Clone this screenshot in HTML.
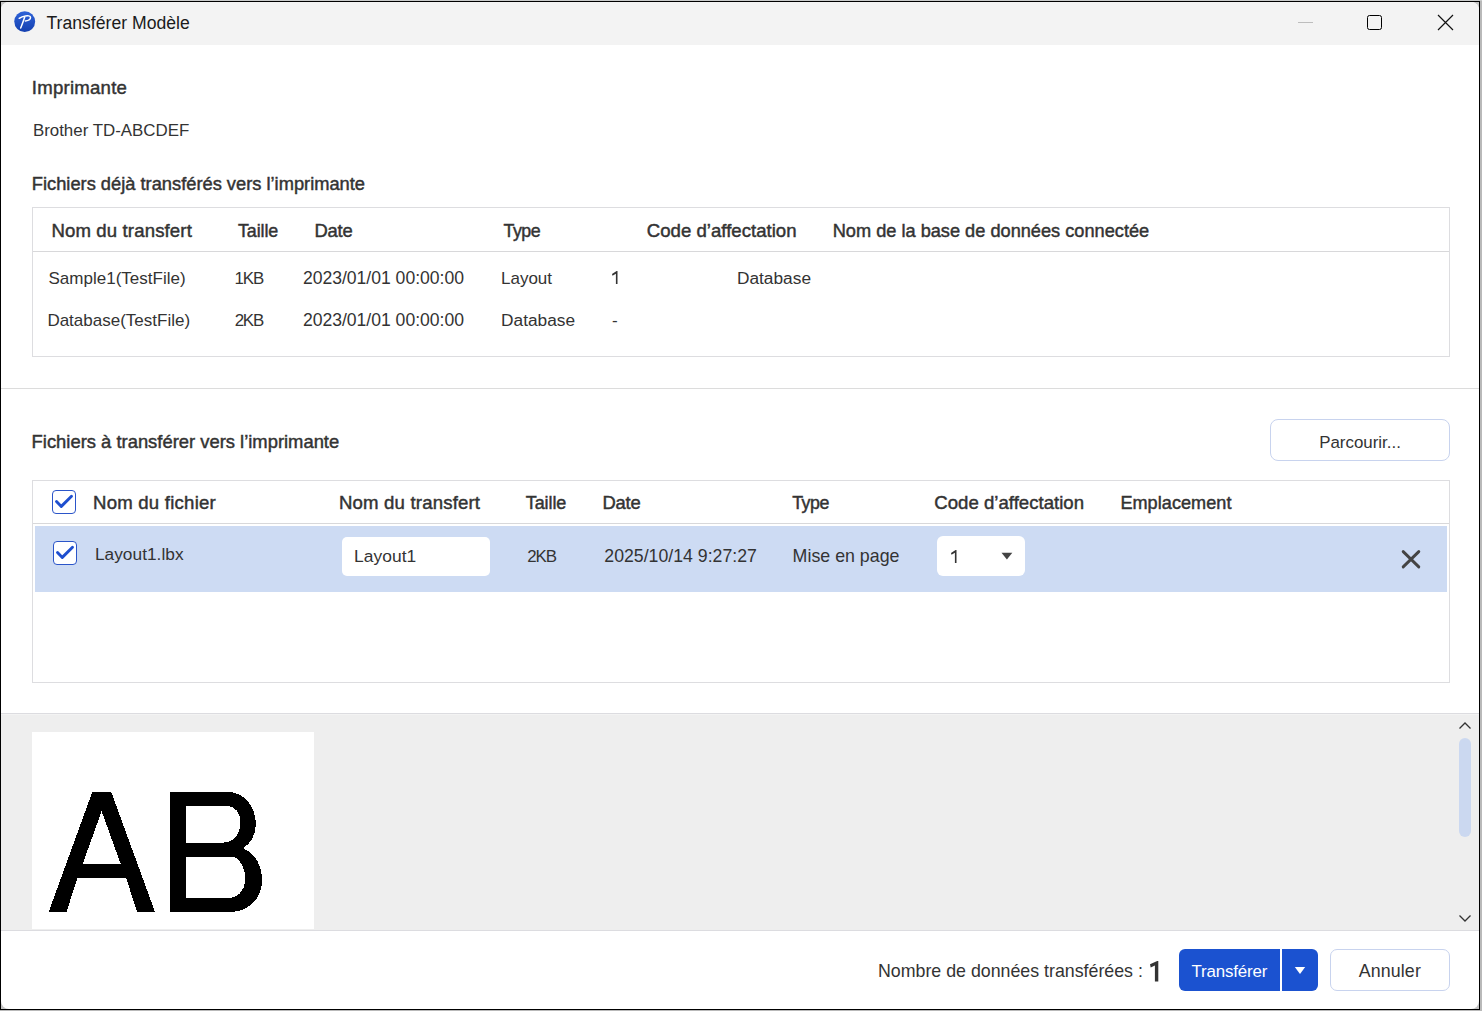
<!DOCTYPE html>
<html><head><meta charset="utf-8">
<style>
*{margin:0;padding:0;box-sizing:border-box}
html,body{width:1482px;height:1011px;overflow:hidden;background:#b9b9b9;font-family:"Liberation Sans",sans-serif;color:#333}
.a{position:absolute}
.t{position:absolute;white-space:nowrap;font-size:17px;line-height:20px;color:#333}
</style></head>
<body>
<div class="a" style="left:0;top:0;width:1482px;height:1px;background:#c9cbcb"></div>
<div class="a" style="left:0;top:1px;width:1480px;height:1009px;border:1px solid #000;background:#c4c4c4"></div>
<div class="a" style="left:1px;top:2px;width:1478px;height:1007px;background:#fff;border-radius:8px;overflow:hidden">
  <div class="a" style="left:0;top:0;width:1478px;height:43px;background:#f3f3f3"></div>
</div>
<!-- icon -->
<svg class="a" style="left:13px;top:11px" width="23" height="23" viewBox="0 0 23 23">
  <defs><linearGradient id="g" x1="0" y1="0" x2="0" y2="1"><stop offset="0" stop-color="#2f63d8"/><stop offset="1" stop-color="#1440b0"/></linearGradient></defs>
  <circle cx="11.7" cy="10.6" r="10.45" fill="url(#g)"/>
  <path d="M6.2 7.3 C8 6 10 5.3 12.5 4.9 C14.8 4.6 17.4 4.6 17.5 6.4 C17.6 8.5 15 9.7 12.4 9.9 M11.9 5.6 C10.6 9.5 9.3 13.2 7.7 17" fill="none" stroke="#fff" stroke-width="1.5" stroke-linecap="round"/>
</svg>
<!-- window controls -->
<div class="a" style="left:1298px;top:22px;width:15px;height:1px;background:#bdbdbd"></div>
<div class="a" style="left:1367px;top:15px;width:15px;height:15px;border:1.5px solid #000;border-radius:2.5px"></div>
<svg class="a" style="left:1437px;top:14px" width="17" height="17" viewBox="0 0 17 17"><path d="M1 1L16 16M16 1L1 16" stroke="#111" stroke-width="1.2"/></svg>

<!-- table 1 -->
<div class="a" style="left:32px;top:207px;width:1418px;height:150px;border:1px solid #dddde0"></div>
<div class="a" style="left:33px;top:251px;width:1416px;height:1px;background:#d8d8da"></div>
<!-- separator -->
<div class="a" style="left:1px;top:388px;width:1478px;height:1px;background:#dcdcdc"></div>
<div class="a" style="left:1270px;top:419px;width:180px;height:42px;border:1px solid #c8d3ee;border-radius:8px"></div>

<!-- table 2 -->
<div class="a" style="left:32px;top:480px;width:1418px;height:203px;border:1px solid #dddde0"></div>
<div class="a" style="left:33px;top:523px;width:1416px;height:1px;background:#d8d8da"></div>
<div class="a" style="left:52px;top:490px;width:24px;height:24px;border:1.6px solid #2b55c9;border-radius:4px;background:#fff"></div>
<svg class="a" style="left:52px;top:490px" width="24" height="24" viewBox="0 0 24 24"><path d="M4.5 11.5L9.3 16.4L19.5 6.2" fill="none" stroke="#1f4fcf" stroke-width="2.9" stroke-linecap="round" stroke-linejoin="round"/></svg>

<div class="a" style="left:35px;top:526px;width:1412px;height:66px;background:#cddbf3"></div>
<div class="a" style="left:53px;top:541px;width:24px;height:24px;border:1.6px solid #2b55c9;border-radius:4px;background:#fff"></div>
<svg class="a" style="left:53px;top:541px" width="24" height="24" viewBox="0 0 24 24"><path d="M4.5 11.5L9.3 16.4L19.5 6.2" fill="none" stroke="#1f4fcf" stroke-width="2.9" stroke-linecap="round" stroke-linejoin="round"/></svg>
<div class="a" style="left:342px;top:537px;width:148px;height:39px;background:#fff;border-radius:5px"></div>
<div class="a" style="left:937px;top:536px;width:88px;height:40px;background:#fff;border-radius:6px"></div>
<svg class="a" style="left:1001px;top:552px" width="12" height="8" viewBox="0 0 12 8"><path d="M0.5 0.8H11.3L5.9 7.5Z" fill="#444"/></svg>
<svg class="a" style="left:1400px;top:549px" width="22" height="21" viewBox="0 0 22 21"><path d="M3.2 2.6L18.8 17.9M18.8 2.6L3.2 17.9" stroke="#444" stroke-width="2.9" stroke-linecap="round"/></svg>

<!-- preview -->
<div class="a" style="left:1px;top:713px;width:1478px;height:218px;background:#eeeeee;border-top:1px solid #dcdce0;border-bottom:1px solid #dcdce0"></div>
<div class="a" style="left:1px;top:714px;width:1478px;height:1px;background:#f3f3f3"></div>
<div class="a" style="left:32px;top:732px;width:282px;height:197px;background:#fff"></div>
<svg class="a" style="left:0;top:0" width="320" height="930" viewBox="0 0 320 930" shape-rendering="crispEdges">
<path fill-rule="evenodd" fill="#000" d="M48.6,912 L92.3,792 H111.3 L155,912 H137 L126.1,877.6 H77.5 L66.5,912 Z M101.6,811.2 L82.6,864.2 H120.8 Z"/>
<path fill-rule="evenodd" fill="#000" d="M170,792 H228 C244,792 255.8,806 255.8,824 C255.8,836 250,844 243,848 C254,853 262,864 262,880 C262,899 248,912 231,912 H170 Z M186.3,805.6 H226.4 C235,805.6 240.5,813 240.5,823 C240.5,834 233,842.6 223,842.6 H186.3 Z M186.3,856.5 H230.6 C239,856.5 245.3,867 245.3,879.7 C245.3,891 237,898.3 227.8,898.3 H186.3 Z"/>
</svg>
<svg class="a" style="left:1458px;top:720px" width="14" height="10" viewBox="0 0 14 10"><path d="M1.5 8.5L7 3L12.5 8.5" fill="none" stroke="#333" stroke-width="1.3"/></svg>
<div class="a" style="left:1459px;top:738px;width:12px;height:99px;background:#cbd8f0;border-radius:6px"></div>
<svg class="a" style="left:1458px;top:914px" width="14" height="10" viewBox="0 0 14 10"><path d="M1.5 1.5L7 7L12.5 1.5" fill="none" stroke="#333" stroke-width="1.3"/></svg>

<!-- footer -->
<div class="a" style="left:1179px;top:949px;width:139px;height:42px;background:#1b52d0;border-radius:6px"></div>
<div class="a" style="left:1280px;top:949px;width:2px;height:42px;background:#fff"></div>
<svg class="a" style="left:1294px;top:966px" width="12" height="9" viewBox="0 0 12 9"><path d="M0.8 1H11.2L6 8Z" fill="#fff"/></svg>
<div class="a" style="left:1330px;top:949px;width:120px;height:42px;border:1px solid #c8d3ee;border-radius:7px"></div>

<!-- standalone digit ones (Segoe style, no foot) -->
<svg class="a" style="left:612px;top:270.9px;overflow:visible" width="6" height="13" viewBox="0 0 6 13"><path d="M0,3.0 L4.6,0 H5.5 V13 H3.9 V2.7 L0.5,4.7 Z" fill="#333"/></svg>
<svg class="a" style="left:950.7px;top:550.2px;overflow:visible" width="6" height="13" viewBox="0 0 6 13"><path d="M0,3.0 L4.6,0 H5.5 V13 H3.9 V2.7 L0.5,4.7 Z" fill="#333"/></svg>
<svg class="a" style="left:1149.5px;top:961px;overflow:visible" width="9" height="21" viewBox="0 0 9 21"><path d="M0,3.3 L7.2,0 H8.3 V20.6 H4.9 V4.6 L0.7,6.5 Z" fill="#333"/></svg>

<div class="t" style="left:46.5px;top:13px;font-size:17.6px;color:#1b1b1b;letter-spacing:0.01px">Transférer Modèle</div>
<div class="t" style="left:31.8px;top:78px;font-size:18.6px;color:#333;letter-spacing:0.24px;-webkit-text-stroke:0.45px #333">Imprimante</div>
<div class="t" style="left:32.9px;top:121px;font-size:16.9px;color:#333">Brother TD-ABCDEF</div>
<div class="t" style="left:31.8px;top:174px;font-size:18.3px;color:#333;-webkit-text-stroke:0.45px #333">Fichiers déjà transférés vers l’imprimante</div>
<div class="t" style="left:51.4px;top:221px;font-size:18.6px;color:#333;letter-spacing:0.13px;-webkit-text-stroke:0.45px #333">Nom du transfert</div>
<div class="t" style="left:238.0px;top:221px;font-size:17.9px;color:#333;letter-spacing:-0.10px;-webkit-text-stroke:0.45px #333">Taille</div>
<div class="t" style="left:314.4px;top:221px;font-size:18.4px;color:#333;letter-spacing:-0.14px;-webkit-text-stroke:0.45px #333">Date</div>
<div class="t" style="left:503.5px;top:221px;font-size:17.8px;color:#333;letter-spacing:-0.49px;-webkit-text-stroke:0.45px #333">Type</div>
<div class="t" style="left:646.8px;top:221px;font-size:18.6px;color:#333;letter-spacing:0.01px;-webkit-text-stroke:0.45px #333">Code d’affectation</div>
<div class="t" style="left:832.7px;top:221px;font-size:18.2px;color:#333;-webkit-text-stroke:0.45px #333">Nom de la base de données connectée</div>
<div class="t" style="left:48.4px;top:269px;font-size:17.0px;color:#333;letter-spacing:0.02px">Sample1(TestFile)</div>
<div class="t" style="left:234.4px;top:269px;font-size:16.9px;color:#333;letter-spacing:-1.08px">1KB</div>
<div class="t" style="left:302.9px;top:268px;font-size:17.6px;color:#333;letter-spacing:-0.02px">2023/01/01 00:00:00</div>
<div class="t" style="left:501.0px;top:269px;font-size:17.0px;color:#333">Layout</div>
<div class="t" style="left:736.9px;top:268px;font-size:17.3px;color:#333;letter-spacing:0.02px">Database</div>
<div class="t" style="left:47.4px;top:311px;font-size:17.0px;color:#333">Database(TestFile)</div>
<div class="t" style="left:234.7px;top:311px;font-size:16.9px;color:#333;letter-spacing:-1.23px">2KB</div>
<div class="t" style="left:302.9px;top:310px;font-size:17.6px;color:#333;letter-spacing:-0.02px">2023/01/01 00:00:00</div>
<div class="t" style="left:501.0px;top:310px;font-size:17.3px;color:#333;letter-spacing:0.02px">Database</div>
<div class="t" style="left:612.0px;top:311px;font-size:17.0px;color:#333">-</div>
<div class="t" style="left:31.6px;top:432px;font-size:18.4px;color:#333;-webkit-text-stroke:0.45px #333">Fichiers à transférer vers l’imprimante</div>
<div class="t" style="left:1319.2px;top:433px;font-size:16.9px;color:#333">Parcourir...</div>
<div class="t" style="left:93.0px;top:493px;font-size:18.6px;color:#333;letter-spacing:0.22px;-webkit-text-stroke:0.45px #333">Nom du fichier</div>
<div class="t" style="left:339.0px;top:493px;font-size:18.6px;color:#333;letter-spacing:0.17px;-webkit-text-stroke:0.45px #333">Nom du transfert</div>
<div class="t" style="left:525.8px;top:493px;font-size:18.0px;color:#333;letter-spacing:-0.10px;-webkit-text-stroke:0.45px #333">Taille</div>
<div class="t" style="left:602.4px;top:493px;font-size:18.4px;color:#333;letter-spacing:-0.14px;-webkit-text-stroke:0.45px #333">Date</div>
<div class="t" style="left:792.2px;top:493px;font-size:17.8px;color:#333;letter-spacing:-0.49px;-webkit-text-stroke:0.45px #333">Type</div>
<div class="t" style="left:934.3px;top:493px;font-size:18.6px;color:#333;letter-spacing:0.01px;-webkit-text-stroke:0.45px #333">Code d’affectation</div>
<div class="t" style="left:1120.4px;top:493px;font-size:18.1px;color:#333;letter-spacing:0.04px;-webkit-text-stroke:0.45px #333">Emplacement</div>
<div class="t" style="left:94.9px;top:544px;font-size:17.3px;color:#333;letter-spacing:0.03px">Layout1.lbx</div>
<div class="t" style="left:354.1px;top:546px;font-size:17.4px;color:#333;letter-spacing:0.05px">Layout1</div>
<div class="t" style="left:527.3px;top:547px;font-size:16.9px;color:#333;letter-spacing:-1.08px">2KB</div>
<div class="t" style="left:604.3px;top:546px;font-size:17.7px;color:#333;letter-spacing:0.01px">2025/10/14 9:27:27</div>
<div class="t" style="left:792.6px;top:546px;font-size:17.8px;color:#333;letter-spacing:0.01px">Mise en page</div>
<div class="t" style="left:878.0px;top:961px;font-size:17.8px;color:#333">Nombre de données transférées :</div>
<div class="t" style="left:1191.5px;top:962px;font-size:16.9px;color:#fff;letter-spacing:-0.15px">Transférer</div>
<div class="t" style="left:1358.8px;top:961px;font-size:17.8px;color:#333;letter-spacing:0.12px">Annuler</div>
</body></html>
